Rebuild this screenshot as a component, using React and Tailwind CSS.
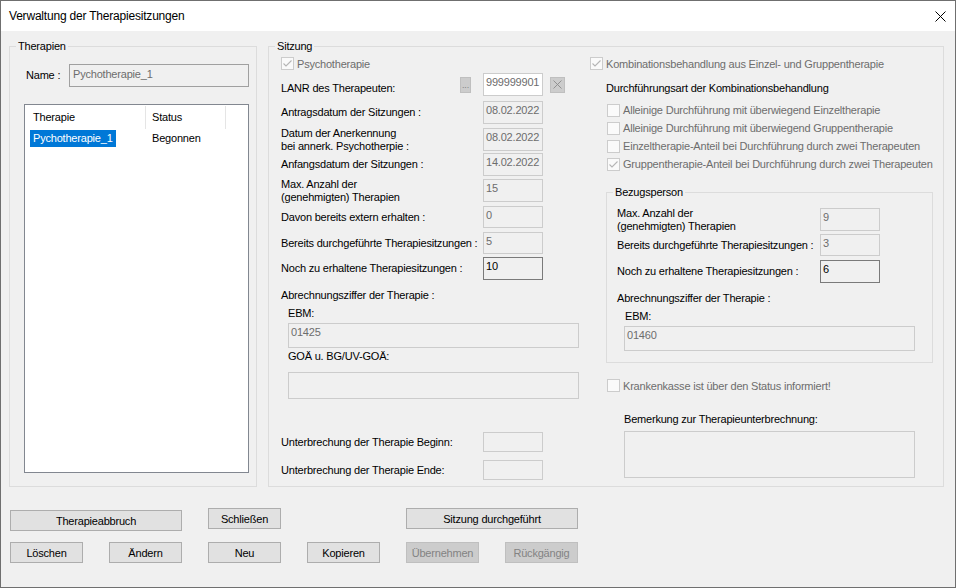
import React from 'react'

const inputBase = 'border border-[#cccccc] bg-[#f0f0f0] text-[#6d6d6d] pl-[2px] pt-[1px] leading-[14px] shrink-0'

function Group({ label, className, children }) {
  return (
    <fieldset className={`border border-[#dcdcdc] shrink-0 ${className}`}>
      <legend className="ml-[6px] px-[2px] leading-[14px] text-black">{label}</legend>
      {children}
    </fieldset>
  )
}

function Check({ checked }) {
  return (
    <span className="w-[13px] h-[13px] border border-[#cccccc] bg-[#fafafa] flex items-center justify-center shrink-0">
      {checked && (
        <svg width="11" height="11" viewBox="0 0 11 11">
          <path d="M1.5 5.5l2.5 2.5 5.5-5.5" stroke="#b5b5b5" strokeWidth="1.1" fill="none" />
        </svg>
      )}
    </span>
  )
}

function CheckRow({ checked, label, className }) {
  return (
    <div className={`flex items-center gap-[3px] text-[#6d6d6d] ${className}`}>
      <Check checked={checked} />
      <span className="leading-[14px]">{label}</span>
    </div>
  )
}

function Row({ label, value, className, box = 'h-[23px]', strong, labelClass = 'w-[202px]' }) {
  return (
    <div className={`flex items-center shrink-0 ${box} ${className}`}>
      <div className={`leading-[13px] shrink-0 ${labelClass}`}>{label}</div>
      <div
        className={`w-[60px] ${box} pl-[2px] pt-[1px] leading-[14px] bg-[#f0f0f0] border ${
          strong ? 'border-[#7a7a7a] text-black' : 'border-[#cccccc] text-[#6d6d6d]'
        }`}
      >
        {value}
      </div>
    </div>
  )
}

function Btn({ children, disabled, className }) {
  return (
    <div
      className={`h-[21px] flex items-center justify-center border leading-[14px] ${
        disabled ? 'bg-[#cccccc] border-[#bfbfbf] text-[#838383]' : 'bg-[#e1e1e1] border-[#adadad] text-black'
      } ${className}`}
    >
      {children}
    </div>
  )
}

export default function App() {
  return (
    <div className="w-[956px] h-[588px] border border-[#6f6f6f] flex flex-col font-['Liberation_Sans',Arial,sans-serif] text-[11px] tracking-[-0.2px] text-black overflow-hidden">
      {/* Title bar */}
      <div className="h-[30px] bg-white flex items-center justify-between pl-[8px] shrink-0">
        <span className="text-[12px] text-black">Verwaltung der Therapiesitzungen</span>
        <svg width="11" height="11" viewBox="0 0 11 11" className="mr-[9px]">
          <path d="M0.5 0.5l10 10M10.5 0.5l-10 10" stroke="#000" strokeWidth="1" />
        </svg>
      </div>

      <div className="flex-1 bg-[#f0f0f0] pl-[8px] pt-[8px] flex flex-col">
        <div className="flex">
          {/* Therapien */}
          <Group label="Therapien" className="w-[248px] h-[448px]">
            <div className="flex items-center mt-[11px] ml-[16px]">
              <span className="w-[43px] shrink-0">Name :</span>
              <div className="w-[180px] h-[23px] border border-[#a0a0a0] bg-[#f0f0f0] text-[#6d6d6d] pl-[3px] pt-[2px] leading-[14px]">
                Pychotherapie_1
              </div>
            </div>
            <div className="mt-[17px] ml-[14px] w-[225px] h-[369px] border border-[#828790] bg-white">
              <div className="flex h-[25px]">
                <div className="w-[121px] flex items-center pl-[8px] border-r border-[#e5e5e5] my-[1px]">Therapie</div>
                <div className="w-[80px] flex items-center pl-[6px] border-r border-[#e5e5e5] my-[1px]">Status</div>
              </div>
              <div className="flex h-[17px] items-center">
                <div className="w-[122px] pl-[5px]">
                  <span className="inline-flex h-[17px] items-center bg-[#0078d7] text-white px-[3px]">Pychotherapie_1</span>
                </div>
                <span className="pl-[5px]">Begonnen</span>
              </div>
            </div>
          </Group>

          {/* Sitzung */}
          <Group label="Sitzung" className="ml-[11px] w-[676px] h-[448px]">
            <div className="flex">
              {/* left column */}
              <div className="ml-[12px] w-[300px] flex flex-col shrink-0">
                <CheckRow checked label="Psychotherapie" className="mt-[4px] h-[13px]" />
                <div className="flex items-center mt-[3px] h-[23px]">
                  <div className="w-[179px] pt-[7px] shrink-0">LANR des Therapeuten:</div>
                  <div className="w-[11px] h-[16px] bg-[#cccccc] border border-[#bfbfbf] text-[#838383] text-[9px] leading-[9px] flex items-end justify-center pb-[2px]">...</div>
                  <div className="ml-[12px] w-[60px] h-[23px] border border-[#cccccc] bg-white text-[#6d6d6d] pl-[2px] pt-[1px] leading-[14px] overflow-hidden">999999901</div>
                  <div className="ml-[7px] w-[15px] h-[16px] bg-[#cccccc] border border-[#bfbfbf] flex items-center justify-center">
                    <svg width="9" height="9" viewBox="0 0 9 9">
                      <path d="M0.5 0.5l8 8M8.5 0.5l-8 8" stroke="#8a8a8a" strokeWidth="0.9" />
                    </svg>
                  </div>
                </div>
                <Row className="mt-[5px]" label="Antragsdatum der Sitzungen :" value="08.02.2022" />
                <Row
                  className="mt-[4px]"
                  label={<>Datum der Anerkennung<br />bei annerk. Psychotherpie :</>}
                  value="08.02.2022"
                />
                <Row className="mt-[2px]" label="Anfangsdatum der Sitzungen :" value="14.02.2022" />
                <Row className="mt-[3px]" label={<>Max. Anzahl der<br />(genehmigten) Therapien</>} value="15" />
                <Row className="mt-[4px]" box="h-[22px]" label="Davon bereits extern erhalten :" value="0" />
                <Row className="mt-[4px]" box="h-[22px]" label="Bereits durchgeführte Therapiesitzungen :" value="5" />
                <Row className="mt-[3px]" strong label="Noch zu erhaltene Therapiesitzungen :" value="10" />
                <div className="mt-[8px] leading-[14px]">Abrechnungsziffer der Therapie :</div>
                <div className="mt-[4px] ml-[7px] leading-[14px]">EBM:</div>
                <div className={`mt-[3px] ml-[7px] w-[291px] h-[25px] ${inputBase}`}>01425</div>
                <div className="mt-[1px] ml-[7px] leading-[14px]">GOÄ u. BG/UV-GOÄ:</div>
                <div className={`mt-[9px] ml-[7px] w-[291px] h-[27px] ${inputBase}`}></div>
                <Row className="mt-[33px]" box="h-[20px]" label="Unterbrechung der Therapie Beginn:" value="" />
                <Row className="mt-[8px]" box="h-[20px]" label="Unterbrechung der Therapie Ende:" value="" />
              </div>

              {/* right column */}
              <div className="ml-[8px] flex flex-col">
                <CheckRow checked label="Kombinationsbehandlung aus Einzel- und Gruppentherapie" className="mt-[4px] h-[13px] ml-[1px]" />
                <div className="mt-[11px] ml-[17px] leading-[14px]">Durchführungsart der Kombinationsbehandlung</div>
                <div className="mt-[6px] ml-[18px] flex flex-col">
                  <CheckRow label="Alleinige Durchführung mit überwiegend Einzeltherapie" className="h-[18px]" />
                  <CheckRow label="Alleinige Durchführung mit überwiegend Gruppentherapie" className="h-[18px]" />
                  <CheckRow label="Einzeltherapie-Anteil bei Durchführung durch zwei Therapeuten" className="h-[18px]" />
                  <CheckRow checked label="Gruppentherapie-Anteil bei Durchführung durch zwei Therapeuten" className="h-[18px]" />
                </div>

                <Group label="Bezugsperson" className="mt-[12px] ml-[17px] w-[327px] h-[178px]">
                  <div className="flex flex-col">
                    <Row
                      className="mt-[9px]"
                      labelClass="w-[213px] pl-[10px]"
                      label={<>Max. Anzahl der<br />(genehmigten) Therapien</>}
                      value="9"
                    />
                    <Row className="mt-[3px]" box="h-[22px]" labelClass="w-[213px] pl-[10px]" label="Bereits durchgeführte Therapiesitzungen :" value="3" />
                    <Row className="mt-[4px]" strong labelClass="w-[213px] pl-[10px]" label="Noch zu erhaltene Therapiesitzungen :" value="6" />
                    <div className="mt-[8px] pl-[10px] leading-[14px]">Abrechnungsziffer der Therapie :</div>
                    <div className="mt-[4px] pl-[18px] leading-[14px]">EBM:</div>
                    <div className={`mt-[3px] ml-[17px] w-[291px] h-[25px] ${inputBase}`}>01460</div>
                  </div>
                </Group>

                <CheckRow label="Krankenkasse ist über den Status informiert!" className="mt-[16px] ml-[18px] h-[13px]" />
                <div className="mt-[20px] ml-[35px] leading-[14px]">Bemerkung zur Therapieunterbrechnung:</div>
                <div className={`mt-[5px] ml-[35px] w-[291px] h-[47px] ${inputBase}`}></div>
              </div>
            </div>
          </Group>
        </div>

        {/* Buttons */}
        <div className="mt-[21px] ml-[1px] grid grid-cols-[repeat(6,73px)] gap-x-[26px] gap-y-[13px]">
          <Btn className="col-span-2 translate-y-[2px]">Therapieabbruch</Btn>
          <Btn>Schließen</Btn>
          <div />
          <Btn className="col-span-2">Sitzung durchgeführt</Btn>
          <Btn>Löschen</Btn>
          <Btn>Ändern</Btn>
          <Btn>Neu</Btn>
          <Btn>Kopieren</Btn>
          <Btn disabled>Übernehmen</Btn>
          <Btn disabled>Rückgängig</Btn>
        </div>
      </div>
    </div>
  )
}
